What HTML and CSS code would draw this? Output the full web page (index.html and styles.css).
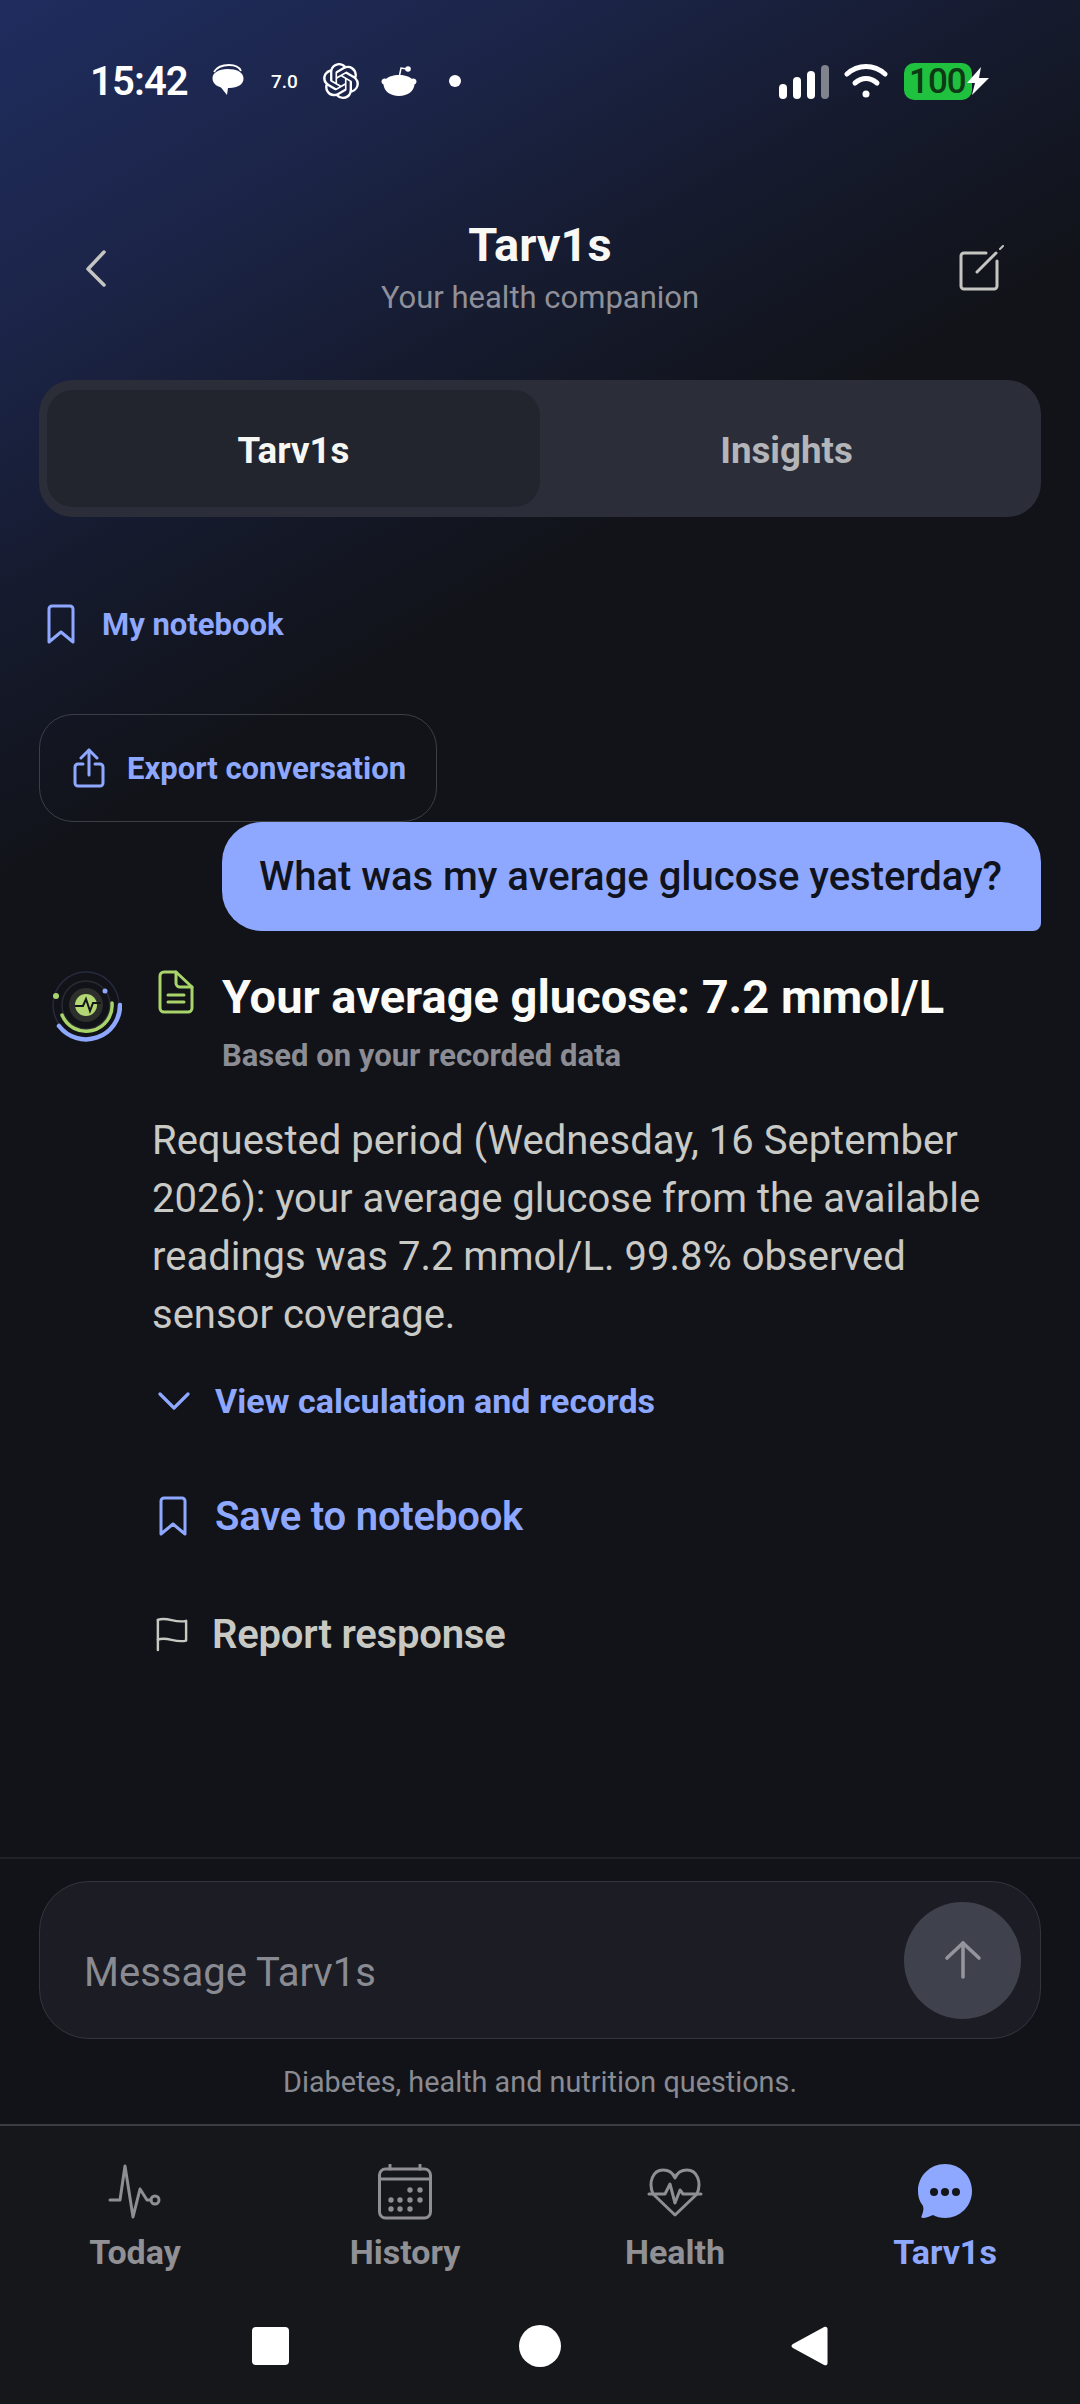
FILE: index.html
```html
<!DOCTYPE html>
<html lang="en">
<head>
<meta charset="utf-8">
<title>Tarv1s</title>
<link rel="stylesheet" href="styles.css">
</head>
<body>
<div class="app">
  <div class="status">
    <div class="status-left">
      <span class="time">15:42</span>
      <svg class="st-msg" viewBox="0 0 32 34"><path d="M2 8C5 3 11 1 17 1c5 0 10 1.500 12 6" fill="none" stroke="#fff" stroke-width="1.800"/><path d="M.5 14c0-5 6-9 15-9s16 3 16 9.500c0 6-6 9.500-14 9.500h-1.500l-1 7-6-7.500C4 22 .5 19 .5 14z" fill="#fff"/></svg>
      <span class="st-num">7.0</span>
      <svg class="st-gpt" viewBox="0 0 24 24"><path fill="#fff" d="M22.2819 9.8211a5.9847 5.9847 0 0 0-.5157-4.9108 6.0462 6.0462 0 0 0-6.5098-2.9A6.0651 6.0651 0 0 0 4.9807 4.1818a5.9847 5.9847 0 0 0-3.9977 2.9 6.0462 6.0462 0 0 0 .7427 7.0966 5.98 5.98 0 0 0 .511 4.9107 6.051 6.051 0 0 0 6.5146 2.9001A5.9847 5.9847 0 0 0 13.2599 24a6.0557 6.0557 0 0 0 5.7718-4.2058 5.9894 5.9894 0 0 0 3.9977-2.9001 6.0557 6.0557 0 0 0-.7475-7.0729zm-9.022 12.6081a4.4755 4.4755 0 0 1-2.8764-1.0408l.1419-.0804 4.7783-2.7582a.7948.7948 0 0 0 .3927-.6813v-6.7369l2.02 1.1686a.071.071 0 0 1 .038.052v5.5826a4.504 4.504 0 0 1-4.4945 4.4944zm-9.6607-4.1254a4.4708 4.4708 0 0 1-.5346-3.0137l.142.0852 4.783 2.7582a.7712.7712 0 0 0 .7806 0l5.8428-3.3685v2.3324a.0804.0804 0 0 1-.0332.0615L9.74 19.9502a4.4992 4.4992 0 0 1-6.1408-1.6464zM2.3408 7.8956a4.485 4.485 0 0 1 2.3655-1.9728V11.6a.7664.7664 0 0 0 .3879.6765l5.8144 3.3543-2.0201 1.1685a.0757.0757 0 0 1-.071 0l-4.8303-2.7865A4.504 4.504 0 0 1 2.3408 7.872zm16.5963 3.8558L13.1038 8.364 15.1192 7.2a.0757.0757 0 0 1 .071 0l4.8303 2.7913a4.4944 4.4944 0 0 1-.6765 8.1042v-5.6772a.79.79 0 0 0-.407-.667zm2.0107-3.0231l-.142-.0852-4.7735-2.7818a.7759.7759 0 0 0-.7854 0L9.409 9.2297V6.8974a.0662.0662 0 0 1 .0284-.0615l4.8303-2.7866a4.4992 4.4992 0 0 1 6.6802 4.66zM8.3065 12.863l-2.02-1.1638a.0804.0804 0 0 1-.038-.0567V6.0742a4.4992 4.4992 0 0 1 7.3757-3.4537l-.142.0805L8.704 5.459a.7948.7948 0 0 0-.3927.6813zm1.0976-2.3654l2.602-1.4998 2.6069 1.4998v2.9994l-2.5974 1.4997-2.6067-1.4997Z"/></svg>
      <svg class="st-reddit" viewBox="0 0 36 32"><path d="M18 13l2-10 6 1" fill="none" stroke="#fff" stroke-width="1.500"/><circle cx="27" cy="4" r="2.800" fill="#fff"/><path d="M18 10c6 0 11 2 13 4 1.500-1 4.500 0 4.500 2.500 0 1.500-1 2.500-2 3C33 26 27 31 18 31S3 26 2.500 19.500c-1-.5-2-1.500-2-3C.5 14 3.500 13 5 14c2-2 7-4 13-4z" fill="#fff"/></svg>
      <span class="st-dot"></span>
    </div>
    <div class="status-right">
      <div class="signal"><i class="b1"></i><i class="b2"></i><i class="b3"></i><i class="b4"></i></div>
      <svg class="wifi" viewBox="0 0 44 36" fill="none" stroke="#fff" stroke-linecap="round" stroke-width="5"><path d="M3 11C14 1 30 1 41 11"/><path d="M11 20c7-6 15-6 22 0"/><circle cx="22" cy="31" r="3.500" fill="#fff" stroke="none"/></svg>
      <div class="battery"><span class="batt-pill">100</span>
      <svg class="bolt" viewBox="0 0 24 28"><path d="M15 0L1 16h8L6 28l17-17H13z" fill="#fff"/></svg></div>
    </div>
  </div>

  <header class="head">
    <svg class="back" viewBox="0 0 24 40" fill="none" stroke="#c5c5c2" stroke-width="3.500" stroke-linecap="round" stroke-linejoin="round"><path d="M20 3L4 20l16 16"/></svg>
    <div class="head-mid">
      <div class="title">Tarv1s</div>
      <div class="subtitle">Your health companion</div>
    </div>
    <svg class="compose" viewBox="0 0 46 46" fill="none" stroke="#c5c5c2" stroke-width="3" stroke-linecap="round" stroke-linejoin="round"><path d="M27 8H5a3 3 0 0 0-3 3v30a3 3 0 0 0 3 3h30a3 3 0 0 0 3-3V16"/><path d="M18 27L37 8"/><path d="M41 4l3-3" stroke-width="2"/></svg>
  </header>

  <div class="tabs">
    <div class="tab tab-on">Tarv1s</div>
    <div class="tab">Insights</div>
  </div>

  <div class="notebook">
    <svg class="i-book" viewBox="0 0 28 40" fill="none" stroke="#8fa8ff" stroke-width="3" stroke-linejoin="round"><path d="M2 38V5a3 3 0 0 1 3-3h18a3 3 0 0 1 3 3v33L14 28z"/></svg>
    <span>My notebook</span>
  </div>

  <div class="export">
    <svg class="i-share" viewBox="0 0 32 40" fill="none" stroke="#8fa8ff" stroke-width="3" stroke-linecap="round" stroke-linejoin="round"><path d="M16 27V2"/><path d="M8 10l8-8 8 8"/><path d="M10 16H5a3 3 0 0 0-3 3v16a3 3 0 0 0 3 3h22a3 3 0 0 0 3-3V19a3 3 0 0 0-3-3h-5"/></svg>
    <span>Export conversation</span>
  </div>

  <div class="bubble-row"><div class="bubble">What was my average glucose yesterday?</div></div>

  <section class="reply">
    <svg class="avatar" viewBox="0 0 72 76" fill="none">
      <circle cx="36" cy="35" r="33" stroke="#262a3f" stroke-width="1.500"/>
      <circle cx="36" cy="35" r="24" stroke="#2a2c33" stroke-width="1.500"/>
      <circle cx="36" cy="35" r="17" fill="#2c2f2b"/>
      <circle cx="36" cy="35" r="11" fill="#b3d873"/>
      <path d="M25 36h8l3-7 4 12 3-8h8" stroke="#14161a" stroke-width="2"/>
      <path d="M62 33A26 26 0 0 1 12 45" stroke="#a9d46a" stroke-width="3.500" stroke-linecap="round"/>
      <path d="M70 35A34 34 0 0 1 9 56" stroke="#8fa8ff" stroke-width="4.500" stroke-linecap="round"/>
      <circle cx="6" cy="26" r="3" fill="#a9d46a"/>
      <circle cx="55" cy="21" r="2.500" fill="#8fa8ff"/>
    </svg>
    <div class="reply-main">
      <div class="answer-head">
        <svg class="i-doc" viewBox="0 0 36 44" fill="none" stroke="#a9d46a" stroke-width="3" stroke-linejoin="round" stroke-linecap="round"><path d="M6 2h12l16 15v21a4 4 0 0 1-4 4H6a4 4 0 0 1-4-4V6a4 4 0 0 1 4-4z"/><path d="M18 2v11a4 4 0 0 0 4 4h12"/><path d="M10 25h16M10 32h16"/></svg>
        <div class="answer-text">
          <div class="answer-title">Your average glucose: 7.2 mmol/L</div>
          <div class="answer-sub">Based on your recorded data</div>
        </div>
      </div>
      <p class="answer-body">Requested period (Wednesday, 16 September 2026): your average glucose from the available readings was 7.2 mmol/L. 99.8% observed sensor coverage.</p>
      <div class="action calc">
        <svg class="i-chev" viewBox="0 0 32 20" fill="none" stroke="#8fa8ff" stroke-width="3.200" stroke-linecap="round" stroke-linejoin="round"><path d="M2 3l14 14L30 3"/></svg>
        <span>View calculation and records</span>
      </div>
      <div class="action save">
        <svg class="i-save" viewBox="0 0 28 40" fill="none" stroke="#8fa8ff" stroke-width="3" stroke-linejoin="round"><path d="M2 38V5a3 3 0 0 1 3-3h18a3 3 0 0 1 3 3v33L14 28z"/></svg>
        <span>Save to notebook</span>
      </div>
      <div class="action report">
        <svg class="i-flag" viewBox="0 0 34 38" fill="none" stroke="#c8c8c2" stroke-width="2.600" stroke-linecap="round" stroke-linejoin="round"><path d="M2 36V4"/><path d="M2 4c10-4 18 4 30 1v21c-12 3-20-5-30-1"/></svg>
        <span>Report response</span>
      </div>
    </div>
  </section>

  <div class="composer-wrap">
    <div class="composer">
      <span class="placeholder">Message Tarv1s</span>
      <div class="send"><svg viewBox="0 0 38 40" fill="none" stroke="#94949c" stroke-width="3.600" stroke-linecap="round" stroke-linejoin="round"><path d="M19 37V3"/><path d="M3 18L19 3l16 15"/></svg></div>
    </div>
    <div class="hint">Diabetes, health and nutrition questions.</div>
  </div>

  <nav class="nav">
    <div class="nav-item">
      <svg viewBox="0 0 56 56" fill="none" stroke="#8e8e93" stroke-width="3" stroke-linecap="round" stroke-linejoin="round"><path d="M3 36h10l5-34 8 51 7-28 7 11h4"/><circle cx="48" cy="36" r="4"/></svg>
      <span>Today</span>
    </div>
    <div class="nav-item">
      <svg viewBox="0 0 56 56" fill="none" stroke="#8e8e93" stroke-width="3" stroke-linecap="round"><rect x="2.500" y="5" width="51" height="49" rx="6"/><path d="M3 15h50M13 1v4M43 1v4"/><g fill="#8e8e93" stroke="none"><circle cx="33" cy="26" r="2.700"/><circle cx="43" cy="26" r="2.700"/><circle cx="14" cy="36" r="2.700"/><circle cx="23" cy="36" r="2.700"/><circle cx="33" cy="36" r="2.700"/><circle cx="43" cy="36" r="2.700"/><circle cx="14" cy="45" r="2.700"/><circle cx="23" cy="45" r="2.700"/><circle cx="33" cy="45" r="2.700"/></g></svg>
      <span>History</span>
    </div>
    <div class="nav-item">
      <svg viewBox="0 0 56 56" fill="none" stroke="#8e8e93" stroke-width="3" stroke-linecap="round" stroke-linejoin="round"><path d="M6 30C1 18 6 6 16 6c6 0 10 3 12 8 2-5 6-8 12-8 10 0 15 12 10 24L28 51z"/><path d="M2 30h16l5-10 5 19 5-13 3 4h18"/></svg>
      <span>Health</span>
    </div>
    <div class="nav-item nav-on">
      <svg viewBox="0 0 56 56"><path d="M28 0c15 0 27 12 27 27S43 54 28 54c-4 0-9-1-12-3-3 1-7 3-10 3-2 0-2-1-1-3 1-3 2-6 1-9C2 37 1 32 1 27 1 12 13 0 28 0z" fill="#8fa8ff"/><g fill="#14161c"><circle cx="17" cy="28" r="4"/><circle cx="28" cy="28" r="4"/><circle cx="39" cy="28" r="4"/></g></svg>
      <span>Tarv1s</span>
    </div>
  </nav>

  <div class="sysnav">
    <span class="sys-square"></span>
    <span class="sys-circle"></span>
    <svg class="sys-back" viewBox="0 0 38 42"><path d="M34 1.500c2-1 3.500 0 3.500 2v35c0 2-1.500 3-3.500 2L2 23c-2-1-2-3 0-4z" fill="#fff"/></svg>
  </div>
</div>
</body>
</html>
```
FILE: styles.css
```css
* { box-sizing: border-box; }
html, body { margin: 0; padding: 0; }
body { background: #111318; font-family: Roboto, "Noto Sans", sans-serif; }
svg { display: block; flex: none; }
.app {
  width: 1080px; height: 2404px; display: flex; flex-direction: column; overflow: hidden;
  background:
    linear-gradient(150deg, #1f2c5e 0%, #1c2549 20%, #151a2d 38%, #111318 55%, #111318 100%) 0 0 / 1080px 1000px no-repeat,
    #111318;
}
.status { height: 160px; padding: 2px 0 0 90px; display: flex; justify-content: space-between; align-items: center; flex: none; }
.status-left { display: flex; align-items: center; }
.time { font-size: 40px; font-weight: 600; color: #fff; width: 98px; letter-spacing: -0.9px; }
.st-msg { width: 32px; height: 34px; margin-left: 24px; }
.st-num { font-size: 19px; font-weight: 500; color: #fff; margin-left: 27px; width: 27px; }
.st-gpt { width: 36px; height: 36px; margin-left: 25px; }
.st-reddit { width: 36px; height: 32px; margin-left: 22px; }
.st-dot { width: 12px; height: 12px; border-radius: 50%; background: #fff; margin-left: 32px; }
.status-right { display: flex; align-items: center; padding-right: 90px; }
.signal { display: flex; align-items: flex-end; gap: 6px; height: 35px; }
.signal i { width: 8px; border-radius: 4px; background: #fff; display: block; }
.b1 { height: 15px; } .b2 { height: 22px; } .b3 { height: 28px; } .signal .b4 { height: 34px; background: #80828d; }
.wifi { width: 44px; height: 36px; margin-left: 15px; }
.battery { display: flex; align-items: center; margin-left: 16px; }
.batt-pill { width: 68px; height: 37px; border-radius: 10px; background: #1fc13f; color: #0d3a15; font-size: 35px; font-weight: 500; line-height: 37px; padding-left: 5px; letter-spacing: -1px; }
.bolt { width: 24px; height: 28px; margin-left: -6px; }

.head { height: 220px; padding: 0 38px 0 84px; display: flex; align-items: flex-start; justify-content: space-between; flex: none; position: relative; }
.back { width: 24px; height: 40px; margin-top: 89px; }
.head-mid { position: absolute; left: 0; right: 0; top: 62px; text-align: center; }
.title { font-size: 47px; font-weight: 700; color: #f8f8f4; line-height: 46px; }
.subtitle { font-size: 31px; color: #8f9099; line-height: 36px; margin-top: 12px; }
.compose { width: 46px; height: 46px; margin-top: 85px; margin-right: 37px; position: relative; }

.tabs { margin: 0 39px; height: 137px; padding: 10px 8px; border-radius: 34px; background: #2b2e38; display: flex; flex: none; }
.tab { flex: 1; display: flex; align-items: center; justify-content: center; font-size: 36.700px; font-weight: 700; color: #b4b5b8; border-radius: 26px; padding-top: 4px; }
.tab-on { background: #22252e; color: #f6f6f3; }

.notebook { display: flex; align-items: center; margin: 87px 0 0 47px; height: 40px; color: #8fa8ff; font-size: 31px; font-weight: 700; flex: none; }
.i-book { width: 28px; height: 40px; margin-right: 27px; }

.export { margin: 70px 0 0 39px; width: 398px; height: 108px; border: 1px solid #3d3f46; border-radius: 34px; display: flex; align-items: center; padding-left: 33px; color: #8fa8ff; font-size: 31px; font-weight: 700; flex: none; }
.i-share { width: 32px; height: 40px; margin-right: 22px; }

.bubble-row { display: flex; justify-content: flex-end; padding-right: 39px; flex: none; }
.bubble { width: 819px; height: 109px; background: #8fa8ff; border-radius: 40px 40px 8px 40px; color: #10131c; font-size: 40px; font-weight: 500; display: flex; align-items: center; justify-content: center; padding-right: 2px; }

.reply { position: relative; padding-left: 152px; margin-top: 39px; flex: 1; min-height: 0; }
.avatar { position: absolute; left: 50px; top: 0; width: 72px; height: 76px; }
.answer-head { display: flex; align-items: flex-start; }
.i-doc { width: 36px; height: 44px; margin: 0 28px 0 6px; }
.answer-title { font-size: 47px; font-weight: 700; color: #fbfbf7; line-height: 54px; }
.answer-sub { font-size: 31px; font-weight: 700; color: #8b8c94; line-height: 36px; margin-top: 14px; }
.answer-body { margin: 38px 0 0; width: 860px; font-size: 40px; line-height: 58px; color: #c9c9c6; }
.action { display: flex; align-items: center; }
.calc { margin-top: 37px; height: 40px; color: #8fa8ff; font-size: 34px; font-weight: 700; }
.i-chev { width: 32px; height: 20px; margin: 0 25px 0 6px; }
.save { margin-top: 75px; height: 40px; color: #8fa8ff; font-size: 40px; font-weight: 600; letter-spacing: -0.2px; }
.i-save { width: 28px; height: 40px; margin: 0 28px 0 7px; }
.report { margin-top: 78px; height: 40px; color: #c9c9c3; font-size: 40px; font-weight: 600; letter-spacing: -0.2px; }
.i-flag { width: 32px; height: 38px; margin: 0 24px 0 4px; }

.composer-wrap { flex: none; height: 267px; border-top: 2px solid #202228; padding: 22px 39px 0; }
.composer { height: 158px; background: #1c1d24; border: 1.500px solid #33353d; border-radius: 50px; display: flex; align-items: center; justify-content: space-between; padding: 0 19px 0 44px; position: relative; }
.placeholder { font-size: 40px; color: #8a8b92; margin-top: 24px; }
.send { width: 117px; height: 117px; border-radius: 50%; background: #3f414c; display: flex; align-items: center; justify-content: center; }
.send svg { width: 38px; height: 40px; }
.hint { text-align: center; font-size: 28.800px; color: #8a8b92; margin-top: 26px; line-height: 34px; }

.nav { flex: none; height: 164px; border-top: 2px solid #3a3c44; background: #16171b; display: flex; padding-top: 38px; }
.nav-item { flex: 1; display: flex; flex-direction: column; align-items: center; color: #909095; font-size: 34px; font-weight: 700; }
.nav-item svg { width: 56px; height: 56px; }
.nav-item span { line-height: 40px; margin-top: 12px; }
.nav-on { color: #8fa8ff; }

.sysnav { flex: none; height: 116px; background: #16171b; display: flex; align-items: center; justify-content: center; gap: 230px; }
.sys-square { width: 37px; height: 38px; border-radius: 4px; background: #fff; }
.sys-circle { width: 42px; height: 42px; border-radius: 50%; background: #fff; }
.sys-back { width: 37px; height: 42px; }
```
